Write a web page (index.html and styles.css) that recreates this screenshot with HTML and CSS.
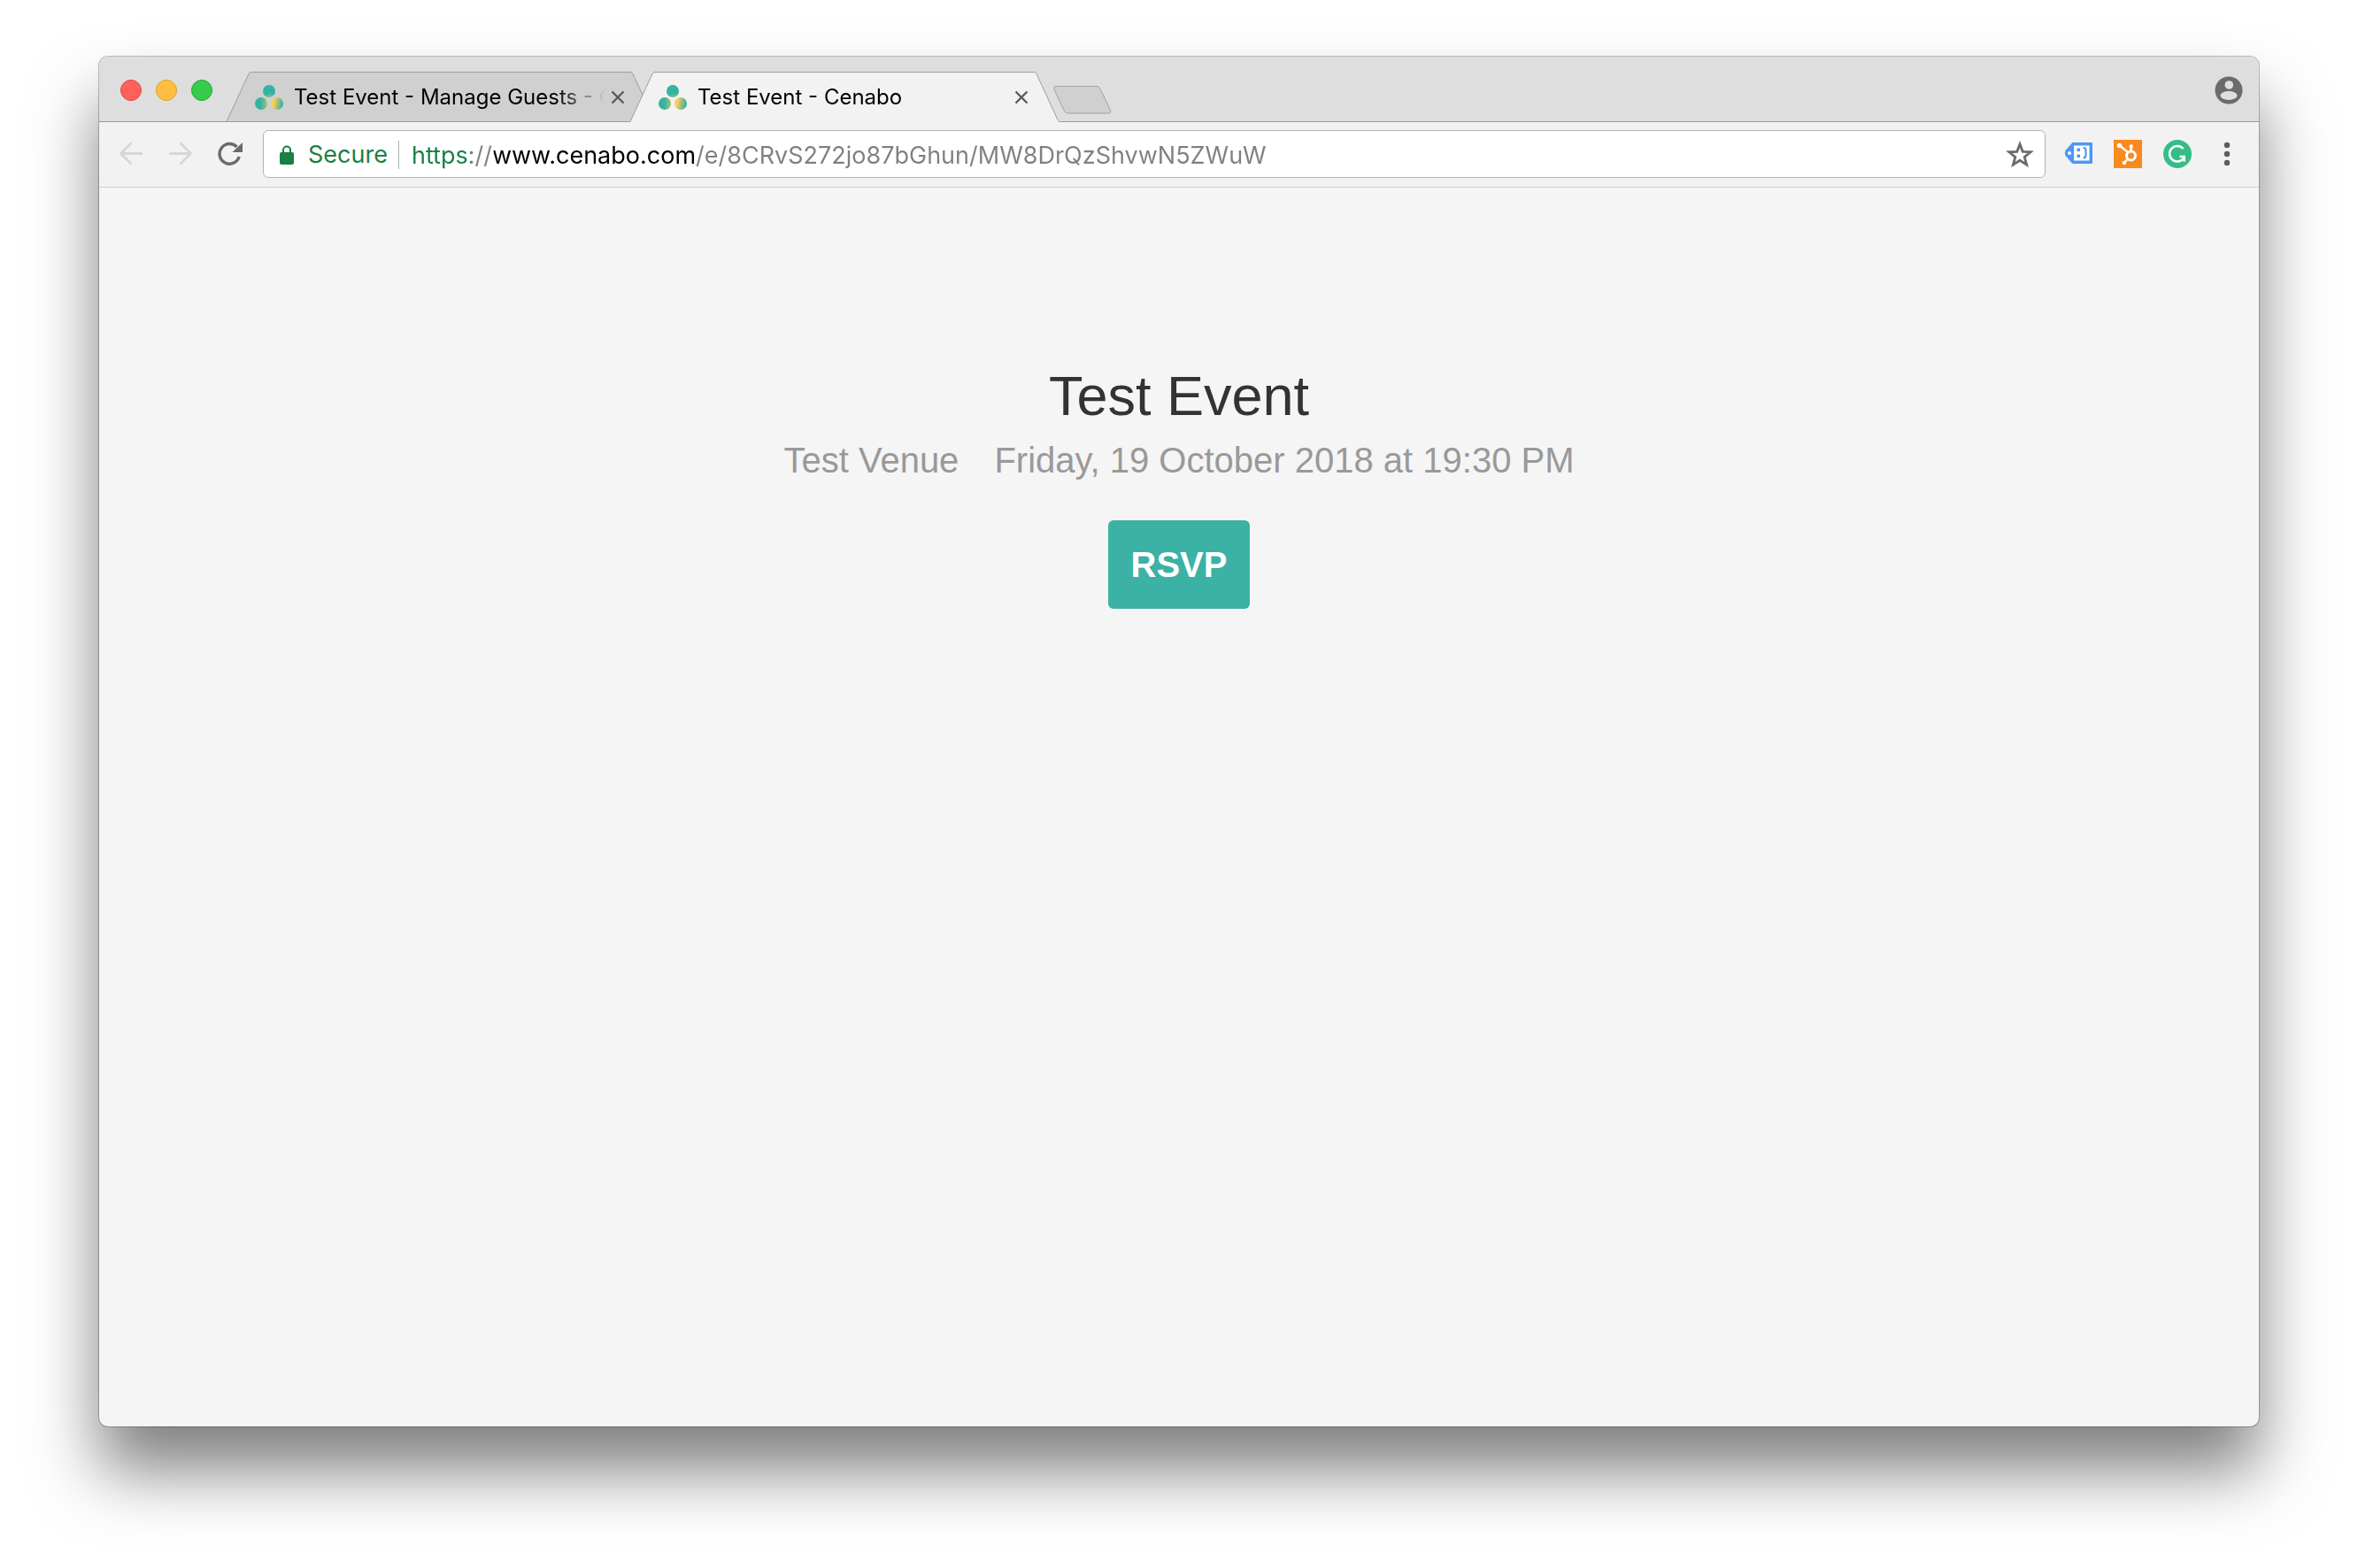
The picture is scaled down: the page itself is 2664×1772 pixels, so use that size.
FILE: index.html
```html
<!DOCTYPE html>
<html lang="en">
<head>
<meta charset="utf-8">
<title>Test Event - Cenabo</title>
<link rel="stylesheet" href="styles.css">
</head>
<body>
<svg class="defs" aria-hidden="true">
  <defs>
    <radialGradient id="dot-top" gradientUnits="userSpaceOnUse" cx="17" cy="17" r="8"><stop offset="0" stop-color="#c9c765"/><stop offset="1" stop-color="#35b3a2"/></radialGradient>
    <linearGradient id="dot-left"><stop offset=".45" stop-color="#35b3a2"/><stop offset="1" stop-color="#a3bf78"/></linearGradient>
    <linearGradient id="dot-right" y2=".2"><stop offset=".3" stop-color="#fdcb5b"/><stop offset="1" stop-color="#35b3a2"/></linearGradient>
    <symbol id="favicon" viewBox="0 0 32 28">
      <circle cx="16" cy="7" r="7" fill="url(#dot-top)"/>
      <circle cx="7" cy="21" r="7" fill="url(#dot-left)"/>
      <circle cx="25" cy="21" r="7" fill="url(#dot-right)"/>
    </symbol>
    <symbol id="tab-shape" viewBox="0 0 484 57">
      <path d="M0 56.500L25 2.500Q26 .5 28 .5H456Q458 .5 459 2.500L483 54.500Q484 56.500 486 56.500V58H0Z"/>
    </symbol>
    <symbol id="close" viewBox="0 0 16 16"><path d="M1.500 1.500l13 13M14.500 1.500l-13 13" fill="none" stroke="#5a5a5a" stroke-width="2.400"/></symbol>
  </defs>
</svg>
<div class="window">
  <header class="tab-strip">
    <div class="lights">
      <button class="light light-close" aria-label="Close window"></button>
      <button class="light light-min" aria-label="Minimize window"></button>
      <button class="light light-max" aria-label="Zoom window"></button>
    </div>
    <nav class="tabs" aria-label="Tabs">
      <div class="tab">
        <svg class="tab-bg tab-bg-idle"><use href="#tab-shape"/><path d="M0 56.500H484"/></svg>
        <svg class="favicon"><use href="#favicon"/></svg>
        <span class="tab-title">Test Event - Manage Guests - Cenabo</span>
        <button class="tab-close" aria-label="Close tab"><svg><use href="#close"/></svg></button>
      </div>
      <div class="tab tab-active">
        <svg class="tab-bg"><use href="#tab-shape"/></svg>
        <svg class="favicon"><use href="#favicon"/></svg>
        <span class="tab-title">Test Event - Cenabo</span>
        <button class="tab-close" aria-label="Close tab"><svg><use href="#close"/></svg></button>
      </div>
    </nav>
    <button class="new-tab" aria-label="New tab"><svg viewBox="0 0 66 32"><path d="M3.500 .5H49Q51.500 .5 53 3.500L64.500 27.500Q66 31 62.500 31H17Q14 31 12.500 28.500L1 4Q-.2 .5 3.500 .5Z" fill="#d0d0d0" stroke="#a0a0a0"/></svg></button>
    <button class="profile" aria-label="Profile"><svg viewBox="0 0 32 32"><circle cx="16" cy="16" r="15.500" fill="#6b6b6b"/><circle cx="16.300" cy="10" r="4.800" fill="#dedede"/><ellipse cx="16" cy="22" rx="9.500" ry="5" fill="#dedede"/></svg></button>
  </header>
  <div class="toolbar">
    <button class="tool" aria-label="Back"><svg viewBox="0 0 32 32" fill="none" stroke="#d6d6d6" stroke-width="2.800"><path d="M29 15.500H5M16.500 3.500L4.500 15.500l12 12"/></svg></button>
    <button class="tool" aria-label="Forward"><svg viewBox="0 0 32 32" fill="none" stroke="#d6d6d6" stroke-width="2.800"><path d="M3 15.500h24M15.500 3.500l12 12-12 12"/></svg></button>
    <button class="tool" aria-label="Reload"><svg viewBox="0 0 32 32"><path d="M26.200 19A11.300 11.300 0 1 1 23.500 8" fill="none" stroke="#6b6b6b" stroke-width="3.400"/><path d="M30 3v11H18.500Z" fill="#6b6b6b"/></svg></button>
    <div class="omnibox">
      <svg class="lock" viewBox="0 0 16 22"><path d="M4 9V5.500a4 4 0 0 1 8 0V9" fill="none" stroke="#188046" stroke-width="2"/><rect y="8" width="16" height="14" rx="2" fill="#188046"/></svg>
      <label class="secure" for="address">Secure</label>
      <input class="address" id="address" type="text" value="https://www.cenabo.com/e/8CRvS272jo87bGhun/MW8DrQzShvwN5ZWuW">
      <button class="tool" aria-label="Bookmark this page"><svg viewBox="0 0 32 32"><path d="M16 4l3.200 8.300 9 .5-7 5.600 2.400 8.700L16 22.200l-7.600 4.900 2.400-8.700-7-5.600 9-.5Z" fill="none" stroke="#6b6b6b" stroke-width="2.800"/></svg></button>
    </div>
    <div class="extensions">
      <button class="tool" aria-label="Tag Assistant"><svg viewBox="0 0 32 32"><path d="M9.500 3H31a1 1 0 0 1 1 1V26a1 1 0 0 1-1 1H9.500L1.500 18Q0 15 1.500 12Z" fill="#4c97f8"/><path d="M11 6.500h17.500v17H11Z" fill="#fff"/><circle cx="6" cy="15" r="2" fill="#fff"/><path d="M14.500 9.500h3.500v3.500H14.500ZM14.500 16.500h3.500v3.500H14.500Z" fill="#4c97f8"/><path d="M21.500 9q3 0 3 3v5.500q0 3-3 3" fill="none" stroke="#4c97f8" stroke-width="2.200"/></svg></button>
      <button class="tool" aria-label="HubSpot"><svg viewBox="0 0 32 32"><path d="M0 0h32v32H0Z" fill="#f88a20"/><g fill="none" stroke="#fff"><circle cx="19.500" cy="18" r="5" stroke-width="3"/><path d="M6 6l10 8M19.700 8v6M12 26l4-4.500" stroke-width="2.400"/></g><g fill="#fff"><circle cx="6.500" cy="6.500" r="2.800"/><circle cx="19.700" cy="7.500" r="2.200"/><circle cx="12" cy="26" r="2.200"/></g></svg></button>
      <button class="tool" aria-label="Grammarly"><svg viewBox="0 0 32 32"><circle cx="16" cy="16" r="16" fill="#35bd87"/><path d="M22.500 10A8.800 8.800 0 1 0 23 21M18.500 19h5.300v5.500" fill="none" stroke="#fff" stroke-width="2.500"/></svg></button>
      <button class="tool" aria-label="Menu"><svg viewBox="0 0 32 32" fill="#5c5c5c"><circle cx="16" cy="6" r="3.200"/><circle cx="16" cy="16" r="3.200"/><circle cx="16" cy="26" r="3.200"/></svg></button>
    </div>
  </div>
  <main class="page">
    <h1 class="event-title">Test Event</h1>
    <p class="event-meta"><span>Test Venue</span><span>Friday, 19 October 2018 at 19:30 PM</span></p>
    <button class="rsvp">RSVP</button>
  </main>
</div>
</body>
</html>
```
FILE: styles.css
```css
* {
  box-sizing: border-box;
}

body {
  margin: 0;
  padding: 64px 112px 160px;
  min-height: 100vh;
  display: flex;
  background: #fff;
  font-family: Inter, "Liberation Sans", sans-serif;
}

button {
  margin: 0;
  padding: 0;
  border: 0;
  background: none;
  font: inherit;
}

svg {
  display: block;
}

.defs {
  position: absolute;
  width: 0;
  height: 0;
}

.window {
  flex: 1;
  min-width: 0;
  display: flex;
  flex-direction: column;
  overflow: hidden;
  border-radius: 10px;
  background: #f5f5f5;
  box-shadow: 0 0 0 1px rgba(0, 0, 0, .24), 0 50px 76px rgba(0, 0, 0, .5);
}

.tab-strip {
  display: flex;
  align-items: center;
  height: 74px;
  padding: 2px 18px 0 24px;
  background: #dedede;
  box-shadow: inset 0 -1px #9c9c9c;
}

.lights {
  display: flex;
  gap: 16px;
}

.light {
  width: 24px;
  height: 24px;
  border: 1px solid;
  border-radius: 50%;
}

.light-close {
  background: #ff605c;
  border-color: #e2463f;
}

.light-min {
  background: #ffbe41;
  border-color: #dfa023;
}

.light-max {
  background: #35cb4b;
  border-color: #1fab34;
}

.tabs {
  display: flex;
  align-self: flex-end;
  margin-left: 16px;
}

.tab {
  position: relative;
  display: flex;
  align-items: center;
  width: 484px;
  height: 57px;
  padding: 0 34px 0 32px;
}

.tab + .tab {
  margin-left: -28px;
}

.tab-bg {
  position: absolute;
  inset: 0;
  width: 100%;
  height: 100%;
  fill: #f2f2f2;
  stroke: #9c9c9c;
}

.tab-bg-idle {
  fill: #d0d0d0;
}

.tab > :not(.tab-bg) {
  position: relative;
}

.favicon {
  width: 32px;
  height: 28px;
  margin-right: 12px;
}

.tab-title {
  flex: 1;
  min-width: 0;
  margin-right: 6px;
  overflow: hidden;
  white-space: nowrap;
  font-size: 24px;
  line-height: 32px;
  color: #000;
  mask-image: linear-gradient(to left, transparent, #000 56px);
}

.tab-close,
.tab-close svg {
  width: 16px;
  height: 16px;
}

.new-tab {
  align-self: flex-end;
  width: 66px;
  height: 32px;
  margin: 0 auto 9px -6px;
}

.profile,
.tool {
  flex: none;
  width: 32px;
  height: 32px;
}

.toolbar {
  display: flex;
  align-items: center;
  gap: 24px;
  height: 74px;
  padding: 0 20px 1px;
  background: #f2f2f2;
  border-bottom: 1px solid #d0d0d0;
}

.omnibox {
  flex: 1;
  min-width: 0;
  display: flex;
  align-items: center;
  height: 54px;
  margin: 0 -3px;
  padding: 2px 12px 0 18px;
  border: 1px solid #b4b4b4;
  border-radius: 6px;
  background: #fff;
  font-size: 27px;
  line-height: 32px;
}

.lock {
  width: 16px;
  height: 22px;
  margin-right: 16px;
}

.secure {
  padding-right: 12px;
  border-right: 1px solid #b0b0b0;
  color: #188046;
}

.address {
  flex: 1;
  min-width: 0;
  height: 40px;
  margin-left: 14px;
  padding: 0;
  border: 0;
  outline: 0;
  font: inherit;
  color: transparent;
  background: linear-gradient(to right, #188046 67px, #808080 67px 93px, #000 93px 320px, #808080 320px);
  background-clip: text;
}

.extensions {
  display: flex;
  gap: 24px;
}

.page {
  flex: 1;
  display: flex;
  flex-direction: column;
  align-items: center;
  padding: 195px 32px 64px;
  font-family: "Liberation Sans", Arial, sans-serif;
}

.event-title {
  margin: 0;
  font-size: 63px;
  font-weight: 400;
  line-height: 80px;
  color: #333;
}

.event-meta {
  display: flex;
  flex-wrap: wrap;
  justify-content: center;
  gap: 40px;
  margin: 7px 0 42px;
  font-size: 40px;
  line-height: 52px;
  color: #999;
}

.rsvp {
  min-width: 160px;
  height: 100px;
  padding: 0 24px;
  border-radius: 6px;
  background: #3cb1a5;
  color: #fff;
  font-size: 40px;
  font-weight: 700;
}
```
